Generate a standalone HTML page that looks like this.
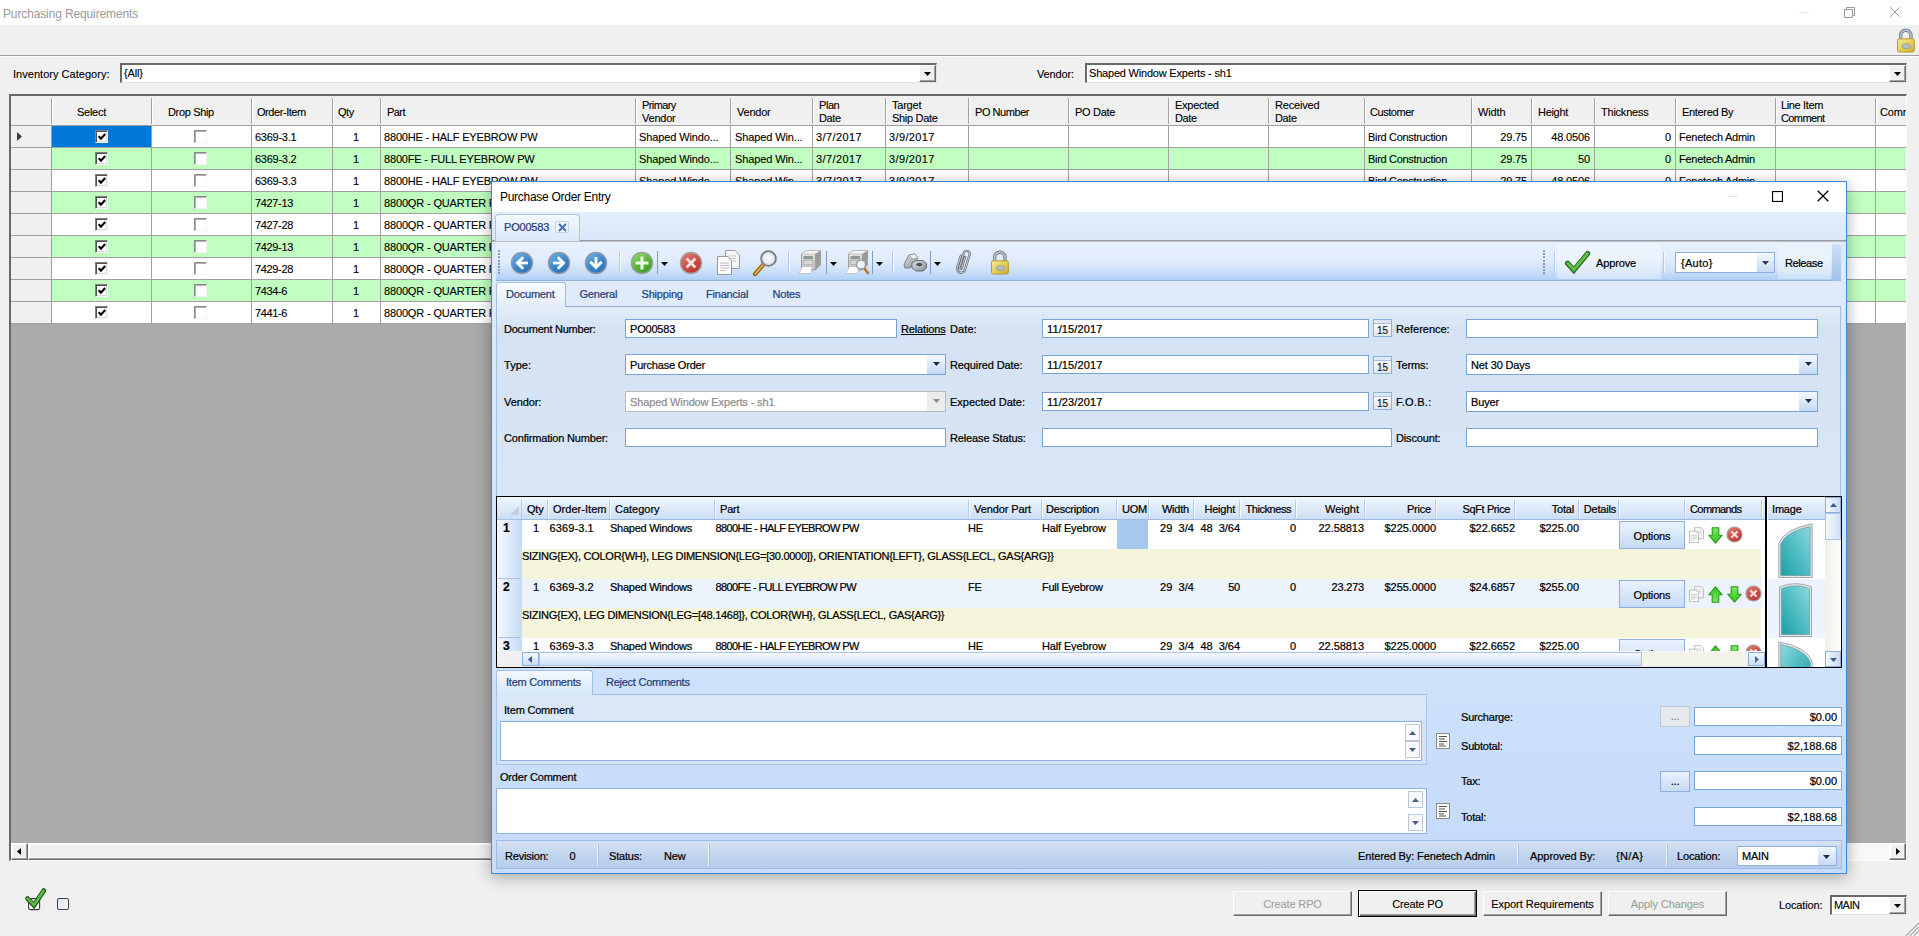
<!DOCTYPE html>
<html lang="en"><head><meta charset="utf-8"><title>Purchasing Requirements</title>
<style>
html,body{margin:0;padding:0}
body{width:1919px;height:936px;position:relative;overflow:hidden;background:#f0f0f0;font-family:"Liberation Sans",sans-serif;font-size:11px;color:#000}
div,span.t,svg{position:absolute;box-sizing:border-box}
span.t{white-space:pre;line-height:14px;height:14px;overflow:visible}
.m{font-size:11px;letter-spacing:-0.15px;-webkit-text-stroke:0.12px}
.d{font-size:11px;letter-spacing:-0.2px;-webkit-text-stroke:0.22px}
.dn{color:#1e3d7b}
</style></head>
<body>
<div style="left:0px;top:0px;width:1919px;height:25px;background:#fff"></div>
<span class="t " style="left:3px;top:7px;font-size:12px;color:#999;letter-spacing:-0.13px">Purchasing Requirements</span>
<svg style="left:1799px;top:12px" width="10" height="1" viewBox="0 0 10 1" ><rect width="10" height="1" fill="#e6e6e6"/></svg>
<svg style="left:1844px;top:7px" width="11" height="11" viewBox="0 0 11 11" ><path d="M2.5 2.5V0.5H10.5V8.5H8.5M0.5 2.5H8.5V10.5H0.5Z" fill="none" stroke="#999" stroke-width="1"/></svg>
<svg style="left:1890px;top:7px" width="10" height="10" viewBox="0 0 10 10" ><path d="M0.3 0.3L9.7 9.7M9.7 0.3L0.3 9.7" fill="none" stroke="#999" stroke-width="1"/></svg>
<div style="left:0px;top:55px;width:1919px;height:1px;background:#a0a0a0"></div>
<div style="left:0px;top:56px;width:1919px;height:1px;background:#fff"></div>
<svg style="left:1895.5px;top:27.5px" width="20" height="25" viewBox="0 0 20 25" >
<defs><linearGradient id="lkb" x1="0" y1="0" x2="1" y2="1"><stop offset="0" stop-color="#f6ea9c"/><stop offset="0.5" stop-color="#e6cf58"/><stop offset="1" stop-color="#cfae30"/></linearGradient></defs>
<path d="M4.6 12.5V7.4a5.2 5.2 0 0 1 10.4 0V12.5" fill="none" stroke="#76838f" stroke-width="3.4"/>
<path d="M4.6 12.5V7.4a5.2 5.2 0 0 1 10.4 0V12.5" fill="none" stroke="#b9c5d0" stroke-width="1.5"/>
<rect x="1.5" y="10.8" width="16.8" height="13.2" rx="1.6" fill="url(#lkb)" stroke="#b59a30" stroke-width="1"/>
<ellipse cx="10.4" cy="18.2" rx="4.3" ry="2.3" fill="#b4bcc4" stroke="#8d959d" stroke-width="0.8"/>
</svg>
<span class="t m" style="left:13px;top:67px;letter-spacing:0.03px;">Inventory Category:</span>
<div style="left:120px;top:63px;width:817px;height:20px;background:#fff;border-top:2px solid #696969;border-left:2px solid #696969;border-bottom:1px solid #e3e3e3;border-right:1px solid #e3e3e3"></div>
<div style="left:919px;top:65px;width:17px;height:17px;background:#f0f0f0;border-top:1px solid #fff;border-left:1px solid #fff;border-right:1px solid #696969;border-bottom:1px solid #696969;box-shadow:inset -1px -1px 0 #a0a0a0"></div>
<svg style="left:923.5px;top:71.5px" width="7" height="4" viewBox="0 0 7 4" ><polygon points="0,0 7,0 3.5,4" fill="#000"/></svg>
<span class="t m" style="left:124px;top:66px;">{All}</span>
<span class="t m" style="left:1037px;top:67px;">Vendor:</span>
<div style="left:1085px;top:63px;width:822px;height:20px;background:#fff;border-top:2px solid #696969;border-left:2px solid #696969;border-bottom:1px solid #e3e3e3;border-right:1px solid #e3e3e3"></div>
<div style="left:1889px;top:65px;width:17px;height:17px;background:#f0f0f0;border-top:1px solid #fff;border-left:1px solid #fff;border-right:1px solid #696969;border-bottom:1px solid #696969;box-shadow:inset -1px -1px 0 #a0a0a0"></div>
<svg style="left:1893.5px;top:71.5px" width="7" height="4" viewBox="0 0 7 4" ><polygon points="0,0 7,0 3.5,4" fill="#000"/></svg>
<span class="t m" style="left:1089px;top:66px;letter-spacing:-0.20px;">Shaped Window Experts - sh1</span>
<div style="left:9px;top:94px;width:1898px;height:767px;background:#ababab;border:2px solid #696969;border-right:1px solid #fff;border-bottom:1px solid #fff"></div>
<div style="left:11px;top:96px;width:1895px;height:30px;background:#f0f0f0;border-bottom:1px solid #a0a0a0"></div>
<div style="left:52px;top:126px;width:1854px;height:22px;background:#fff;border-bottom:1px solid #a0a0a0"></div>
<div style="left:11px;top:126px;width:40px;height:22px;background:#f0f0f0;border-bottom:1px solid #a0a0a0"></div>
<div style="left:52px;top:148px;width:1854px;height:22px;background:#c0ffc0;border-bottom:1px solid #a0a0a0"></div>
<div style="left:11px;top:148px;width:40px;height:22px;background:#f0f0f0;border-bottom:1px solid #a0a0a0"></div>
<div style="left:52px;top:170px;width:1854px;height:22px;background:#fff;border-bottom:1px solid #a0a0a0"></div>
<div style="left:11px;top:170px;width:40px;height:22px;background:#f0f0f0;border-bottom:1px solid #a0a0a0"></div>
<div style="left:52px;top:192px;width:1854px;height:22px;background:#c0ffc0;border-bottom:1px solid #a0a0a0"></div>
<div style="left:11px;top:192px;width:40px;height:22px;background:#f0f0f0;border-bottom:1px solid #a0a0a0"></div>
<div style="left:52px;top:214px;width:1854px;height:22px;background:#fff;border-bottom:1px solid #a0a0a0"></div>
<div style="left:11px;top:214px;width:40px;height:22px;background:#f0f0f0;border-bottom:1px solid #a0a0a0"></div>
<div style="left:52px;top:236px;width:1854px;height:22px;background:#c0ffc0;border-bottom:1px solid #a0a0a0"></div>
<div style="left:11px;top:236px;width:40px;height:22px;background:#f0f0f0;border-bottom:1px solid #a0a0a0"></div>
<div style="left:52px;top:258px;width:1854px;height:22px;background:#fff;border-bottom:1px solid #a0a0a0"></div>
<div style="left:11px;top:258px;width:40px;height:22px;background:#f0f0f0;border-bottom:1px solid #a0a0a0"></div>
<div style="left:52px;top:280px;width:1854px;height:22px;background:#c0ffc0;border-bottom:1px solid #a0a0a0"></div>
<div style="left:11px;top:280px;width:40px;height:22px;background:#f0f0f0;border-bottom:1px solid #a0a0a0"></div>
<div style="left:52px;top:302px;width:1854px;height:22px;background:#fff;border-bottom:1px solid #a0a0a0"></div>
<div style="left:11px;top:302px;width:40px;height:22px;background:#f0f0f0;border-bottom:1px solid #a0a0a0"></div>
<div style="left:51px;top:98px;width:1px;height:26px;background:#a0a0a0"></div>
<div style="left:52px;top:98px;width:1px;height:26px;background:#fff"></div>
<div style="left:51px;top:126px;width:1px;height:198px;background:#a0a0a0"></div>
<div style="left:151px;top:98px;width:1px;height:26px;background:#a0a0a0"></div>
<div style="left:152px;top:98px;width:1px;height:26px;background:#fff"></div>
<div style="left:151px;top:126px;width:1px;height:198px;background:#a0a0a0"></div>
<div style="left:251px;top:98px;width:1px;height:26px;background:#a0a0a0"></div>
<div style="left:252px;top:98px;width:1px;height:26px;background:#fff"></div>
<div style="left:251px;top:126px;width:1px;height:198px;background:#a0a0a0"></div>
<div style="left:332px;top:98px;width:1px;height:26px;background:#a0a0a0"></div>
<div style="left:333px;top:98px;width:1px;height:26px;background:#fff"></div>
<div style="left:332px;top:126px;width:1px;height:198px;background:#a0a0a0"></div>
<div style="left:380px;top:98px;width:1px;height:26px;background:#a0a0a0"></div>
<div style="left:381px;top:98px;width:1px;height:26px;background:#fff"></div>
<div style="left:380px;top:126px;width:1px;height:198px;background:#a0a0a0"></div>
<div style="left:635px;top:98px;width:1px;height:26px;background:#a0a0a0"></div>
<div style="left:636px;top:98px;width:1px;height:26px;background:#fff"></div>
<div style="left:635px;top:126px;width:1px;height:198px;background:#a0a0a0"></div>
<div style="left:730px;top:98px;width:1px;height:26px;background:#a0a0a0"></div>
<div style="left:731px;top:98px;width:1px;height:26px;background:#fff"></div>
<div style="left:730px;top:126px;width:1px;height:198px;background:#a0a0a0"></div>
<div style="left:812px;top:98px;width:1px;height:26px;background:#a0a0a0"></div>
<div style="left:813px;top:98px;width:1px;height:26px;background:#fff"></div>
<div style="left:812px;top:126px;width:1px;height:198px;background:#a0a0a0"></div>
<div style="left:885px;top:98px;width:1px;height:26px;background:#a0a0a0"></div>
<div style="left:886px;top:98px;width:1px;height:26px;background:#fff"></div>
<div style="left:885px;top:126px;width:1px;height:198px;background:#a0a0a0"></div>
<div style="left:968px;top:98px;width:1px;height:26px;background:#a0a0a0"></div>
<div style="left:969px;top:98px;width:1px;height:26px;background:#fff"></div>
<div style="left:968px;top:126px;width:1px;height:198px;background:#a0a0a0"></div>
<div style="left:1068px;top:98px;width:1px;height:26px;background:#a0a0a0"></div>
<div style="left:1069px;top:98px;width:1px;height:26px;background:#fff"></div>
<div style="left:1068px;top:126px;width:1px;height:198px;background:#a0a0a0"></div>
<div style="left:1168px;top:98px;width:1px;height:26px;background:#a0a0a0"></div>
<div style="left:1169px;top:98px;width:1px;height:26px;background:#fff"></div>
<div style="left:1168px;top:126px;width:1px;height:198px;background:#a0a0a0"></div>
<div style="left:1268px;top:98px;width:1px;height:26px;background:#a0a0a0"></div>
<div style="left:1269px;top:98px;width:1px;height:26px;background:#fff"></div>
<div style="left:1268px;top:126px;width:1px;height:198px;background:#a0a0a0"></div>
<div style="left:1364px;top:98px;width:1px;height:26px;background:#a0a0a0"></div>
<div style="left:1365px;top:98px;width:1px;height:26px;background:#fff"></div>
<div style="left:1364px;top:126px;width:1px;height:198px;background:#a0a0a0"></div>
<div style="left:1471px;top:98px;width:1px;height:26px;background:#a0a0a0"></div>
<div style="left:1472px;top:98px;width:1px;height:26px;background:#fff"></div>
<div style="left:1471px;top:126px;width:1px;height:198px;background:#a0a0a0"></div>
<div style="left:1531px;top:98px;width:1px;height:26px;background:#a0a0a0"></div>
<div style="left:1532px;top:98px;width:1px;height:26px;background:#fff"></div>
<div style="left:1531px;top:126px;width:1px;height:198px;background:#a0a0a0"></div>
<div style="left:1594px;top:98px;width:1px;height:26px;background:#a0a0a0"></div>
<div style="left:1595px;top:98px;width:1px;height:26px;background:#fff"></div>
<div style="left:1594px;top:126px;width:1px;height:198px;background:#a0a0a0"></div>
<div style="left:1675px;top:98px;width:1px;height:26px;background:#a0a0a0"></div>
<div style="left:1676px;top:98px;width:1px;height:26px;background:#fff"></div>
<div style="left:1675px;top:126px;width:1px;height:198px;background:#a0a0a0"></div>
<div style="left:1775px;top:98px;width:1px;height:26px;background:#a0a0a0"></div>
<div style="left:1776px;top:98px;width:1px;height:26px;background:#fff"></div>
<div style="left:1775px;top:126px;width:1px;height:198px;background:#a0a0a0"></div>
<div style="left:1875px;top:98px;width:1px;height:26px;background:#a0a0a0"></div>
<div style="left:1876px;top:98px;width:1px;height:26px;background:#fff"></div>
<div style="left:1875px;top:126px;width:1px;height:198px;background:#a0a0a0"></div>
<div style="left:52px;top:126px;width:99px;height:21px;background:#0078d7"></div>
<svg style="left:17.0px;top:132.0px" width="5" height="9" viewBox="0 0 5 9" ><polygon points="0,0 5,4.5 0,9" fill="#3c3c3c"/></svg>
<span class="t m" style="left:77px;top:105px;letter-spacing:-0.26px;">Select</span>
<span class="t m" style="left:168px;top:105px;letter-spacing:-0.35px;">Drop Ship</span>
<span class="t m" style="left:257px;top:105px;letter-spacing:-0.44px;">Order-Item</span>
<span class="t m" style="left:338px;top:105px;letter-spacing:-0.46px;">Qty</span>
<span class="t m" style="left:387px;top:105px;letter-spacing:-0.55px;">Part</span>
<span class="t m" style="left:737px;top:105px;letter-spacing:-0.23px;">Vendor</span>
<span class="t m" style="left:975px;top:105px;letter-spacing:-0.45px;">PO Number</span>
<span class="t m" style="left:1075px;top:105px;letter-spacing:-0.31px;">PO Date</span>
<span class="t m" style="left:1370px;top:105px;letter-spacing:-0.46px;">Customer</span>
<span class="t m" style="left:1478px;top:105px;letter-spacing:-0.15px;">Width</span>
<span class="t m" style="left:1538px;top:105px;letter-spacing:-0.30px;">Height</span>
<span class="t m" style="left:1601px;top:105px;letter-spacing:-0.23px;">Thickness</span>
<span class="t m" style="left:1682px;top:105px;letter-spacing:-0.32px;">Entered By</span>
<span class="t m" style="left:1880px;top:105px;">Comments</span>
<span class="t m" style="left:642px;top:98px;letter-spacing:-0.60px;">Primary</span>
<span class="t m" style="left:642px;top:111px;letter-spacing:-0.23px;">Vendor</span>
<span class="t m" style="left:819px;top:98px;letter-spacing:-0.45px;">Plan</span>
<span class="t m" style="left:819px;top:111px;letter-spacing:-0.38px;">Date</span>
<span class="t m" style="left:892px;top:98px;letter-spacing:-0.22px;">Target</span>
<span class="t m" style="left:892px;top:111px;letter-spacing:-0.31px;">Ship Date</span>
<span class="t m" style="left:1175px;top:98px;letter-spacing:-0.27px;">Expected</span>
<span class="t m" style="left:1175px;top:111px;letter-spacing:-0.38px;">Date</span>
<span class="t m" style="left:1275px;top:98px;letter-spacing:-0.17px;">Received</span>
<span class="t m" style="left:1275px;top:111px;letter-spacing:-0.38px;">Date</span>
<span class="t m" style="left:1781px;top:98px;letter-spacing:-0.36px;">Line Item</span>
<span class="t m" style="left:1781px;top:111px;letter-spacing:-0.60px;">Comment</span>
<div style="left:1906px;top:96px;width:14px;height:30px;background:#f0f0f0;border-left:1px solid #fff"></div>
<div style="left:95px;top:130px;width:13px;height:13px;background:#fff;border:1px solid;border-color:#808080 #f4f4f4 #f4f4f4 #808080;box-shadow:inset 1px 1px 0 #505050, inset -1px -1px 0 #dcdcdc"></div>
<svg style="left:98px;top:133px" width="8" height="8" viewBox="0 0 8 8" ><path d="M0.6 3.2L2.9 5.6L7.2 1.0" fill="none" stroke="#000" stroke-width="2.1"/></svg>
<div style="left:194px;top:130px;width:13px;height:13px;background:#fff;border:1px solid;border-color:#8a8a8a #f4f4f4 #f4f4f4 #8a8a8a;box-shadow:inset 1px 1px 0 #b0b0b0"></div>
<span class="t m" style="left:255px;top:129.5px;letter-spacing:-0.27px;">6369-3.1</span>
<span class="t m" style="left:333px;top:129.5px;width:26px;text-align:right;">1</span>
<span class="t m" style="left:384px;top:129.5px;letter-spacing:-0.18px;">8800HE - HALF EYEBROW PW</span>
<span class="t m" style="left:639px;top:129.5px;letter-spacing:-0.12px;">Shaped Windo...</span>
<span class="t m" style="left:735px;top:129.5px;letter-spacing:-0.12px;">Shaped Win...</span>
<span class="t m" style="left:816px;top:129.5px;letter-spacing:0.40px;">3/7/2017</span>
<span class="t m" style="left:889px;top:129.5px;letter-spacing:0.37px;">3/9/2017</span>
<span class="t m" style="left:1368px;top:129.5px;letter-spacing:-0.32px;">Bird Construction</span>
<span class="t m" style="left:1472px;top:129.5px;width:55px;text-align:right;letter-spacing:-0.17px;">29.75</span>
<span class="t m" style="left:1532px;top:129.5px;width:58px;text-align:right;letter-spacing:-0.15px;">48.0506</span>
<span class="t m" style="left:1595px;top:129.5px;width:76px;text-align:right;">0</span>
<span class="t m" style="left:1679px;top:129.5px;letter-spacing:-0.26px;">Fenetech Admin</span>
<div style="left:95px;top:152px;width:13px;height:13px;background:#fff;border:1px solid;border-color:#808080 #f4f4f4 #f4f4f4 #808080;box-shadow:inset 1px 1px 0 #505050, inset -1px -1px 0 #dcdcdc"></div>
<svg style="left:98px;top:155px" width="8" height="8" viewBox="0 0 8 8" ><path d="M0.6 3.2L2.9 5.6L7.2 1.0" fill="none" stroke="#000" stroke-width="2.1"/></svg>
<div style="left:194px;top:152px;width:13px;height:13px;background:#fff;border:1px solid;border-color:#8a8a8a #f4f4f4 #f4f4f4 #8a8a8a;box-shadow:inset 1px 1px 0 #b0b0b0"></div>
<span class="t m" style="left:255px;top:151.5px;letter-spacing:-0.27px;">6369-3.2</span>
<span class="t m" style="left:333px;top:151.5px;width:26px;text-align:right;">1</span>
<span class="t m" style="left:384px;top:151.5px;letter-spacing:-0.18px;">8800FE - FULL EYEBROW PW</span>
<span class="t m" style="left:639px;top:151.5px;letter-spacing:-0.12px;">Shaped Windo...</span>
<span class="t m" style="left:735px;top:151.5px;letter-spacing:-0.12px;">Shaped Win...</span>
<span class="t m" style="left:816px;top:151.5px;letter-spacing:0.40px;">3/7/2017</span>
<span class="t m" style="left:889px;top:151.5px;letter-spacing:0.37px;">3/9/2017</span>
<span class="t m" style="left:1368px;top:151.5px;letter-spacing:-0.32px;">Bird Construction</span>
<span class="t m" style="left:1472px;top:151.5px;width:55px;text-align:right;letter-spacing:-0.17px;">29.75</span>
<span class="t m" style="left:1532px;top:151.5px;width:58px;text-align:right;">50</span>
<span class="t m" style="left:1595px;top:151.5px;width:76px;text-align:right;">0</span>
<span class="t m" style="left:1679px;top:151.5px;letter-spacing:-0.26px;">Fenetech Admin</span>
<div style="left:95px;top:174px;width:13px;height:13px;background:#fff;border:1px solid;border-color:#808080 #f4f4f4 #f4f4f4 #808080;box-shadow:inset 1px 1px 0 #505050, inset -1px -1px 0 #dcdcdc"></div>
<svg style="left:98px;top:177px" width="8" height="8" viewBox="0 0 8 8" ><path d="M0.6 3.2L2.9 5.6L7.2 1.0" fill="none" stroke="#000" stroke-width="2.1"/></svg>
<div style="left:194px;top:174px;width:13px;height:13px;background:#fff;border:1px solid;border-color:#8a8a8a #f4f4f4 #f4f4f4 #8a8a8a;box-shadow:inset 1px 1px 0 #b0b0b0"></div>
<span class="t m" style="left:255px;top:173.5px;letter-spacing:-0.27px;">6369-3.3</span>
<span class="t m" style="left:333px;top:173.5px;width:26px;text-align:right;">1</span>
<span class="t m" style="left:384px;top:173.5px;letter-spacing:-0.18px;">8800HE - HALF EYEBROW PW</span>
<span class="t m" style="left:639px;top:173.5px;letter-spacing:-0.12px;">Shaped Windo...</span>
<span class="t m" style="left:735px;top:173.5px;letter-spacing:-0.12px;">Shaped Win...</span>
<span class="t m" style="left:816px;top:173.5px;letter-spacing:0.40px;">3/7/2017</span>
<span class="t m" style="left:889px;top:173.5px;letter-spacing:0.37px;">3/9/2017</span>
<span class="t m" style="left:1368px;top:173.5px;letter-spacing:-0.32px;">Bird Construction</span>
<span class="t m" style="left:1472px;top:173.5px;width:55px;text-align:right;letter-spacing:-0.17px;">29.75</span>
<span class="t m" style="left:1532px;top:173.5px;width:58px;text-align:right;letter-spacing:-0.15px;">48.0506</span>
<span class="t m" style="left:1595px;top:173.5px;width:76px;text-align:right;">0</span>
<span class="t m" style="left:1679px;top:173.5px;letter-spacing:-0.26px;">Fenetech Admin</span>
<div style="left:95px;top:196px;width:13px;height:13px;background:#fff;border:1px solid;border-color:#808080 #f4f4f4 #f4f4f4 #808080;box-shadow:inset 1px 1px 0 #505050, inset -1px -1px 0 #dcdcdc"></div>
<svg style="left:98px;top:199px" width="8" height="8" viewBox="0 0 8 8" ><path d="M0.6 3.2L2.9 5.6L7.2 1.0" fill="none" stroke="#000" stroke-width="2.1"/></svg>
<div style="left:194px;top:196px;width:13px;height:13px;background:#fff;border:1px solid;border-color:#8a8a8a #f4f4f4 #f4f4f4 #8a8a8a;box-shadow:inset 1px 1px 0 #b0b0b0"></div>
<span class="t m" style="left:255px;top:195.5px;letter-spacing:-0.34px;">7427-13</span>
<span class="t m" style="left:333px;top:195.5px;width:26px;text-align:right;">1</span>
<span class="t m" style="left:384px;top:195.5px;">8800QR - QUARTER ROUND PW</span>
<span class="t m" style="left:639px;top:195.5px;letter-spacing:-0.12px;">Shaped Windo...</span>
<span class="t m" style="left:735px;top:195.5px;letter-spacing:-0.12px;">Shaped Win...</span>
<span class="t m" style="left:816px;top:195.5px;letter-spacing:0.40px;">3/7/2017</span>
<span class="t m" style="left:889px;top:195.5px;letter-spacing:0.37px;">3/9/2017</span>
<span class="t m" style="left:1368px;top:195.5px;letter-spacing:-0.32px;">Bird Construction</span>
<span class="t m" style="left:1472px;top:195.5px;width:55px;text-align:right;letter-spacing:-0.17px;">29.75</span>
<span class="t m" style="left:1532px;top:195.5px;width:58px;text-align:right;">24</span>
<span class="t m" style="left:1595px;top:195.5px;width:76px;text-align:right;">0</span>
<span class="t m" style="left:1679px;top:195.5px;letter-spacing:-0.26px;">Fenetech Admin</span>
<div style="left:95px;top:218px;width:13px;height:13px;background:#fff;border:1px solid;border-color:#808080 #f4f4f4 #f4f4f4 #808080;box-shadow:inset 1px 1px 0 #505050, inset -1px -1px 0 #dcdcdc"></div>
<svg style="left:98px;top:221px" width="8" height="8" viewBox="0 0 8 8" ><path d="M0.6 3.2L2.9 5.6L7.2 1.0" fill="none" stroke="#000" stroke-width="2.1"/></svg>
<div style="left:194px;top:218px;width:13px;height:13px;background:#fff;border:1px solid;border-color:#8a8a8a #f4f4f4 #f4f4f4 #8a8a8a;box-shadow:inset 1px 1px 0 #b0b0b0"></div>
<span class="t m" style="left:255px;top:217.5px;letter-spacing:-0.34px;">7427-28</span>
<span class="t m" style="left:333px;top:217.5px;width:26px;text-align:right;">1</span>
<span class="t m" style="left:384px;top:217.5px;">8800QR - QUARTER ROUND PW</span>
<span class="t m" style="left:639px;top:217.5px;letter-spacing:-0.12px;">Shaped Windo...</span>
<span class="t m" style="left:735px;top:217.5px;letter-spacing:-0.12px;">Shaped Win...</span>
<span class="t m" style="left:816px;top:217.5px;letter-spacing:0.40px;">3/7/2017</span>
<span class="t m" style="left:889px;top:217.5px;letter-spacing:0.37px;">3/9/2017</span>
<span class="t m" style="left:1368px;top:217.5px;letter-spacing:-0.32px;">Bird Construction</span>
<span class="t m" style="left:1472px;top:217.5px;width:55px;text-align:right;letter-spacing:-0.17px;">29.75</span>
<span class="t m" style="left:1532px;top:217.5px;width:58px;text-align:right;">24</span>
<span class="t m" style="left:1595px;top:217.5px;width:76px;text-align:right;">0</span>
<span class="t m" style="left:1679px;top:217.5px;letter-spacing:-0.26px;">Fenetech Admin</span>
<div style="left:95px;top:240px;width:13px;height:13px;background:#fff;border:1px solid;border-color:#808080 #f4f4f4 #f4f4f4 #808080;box-shadow:inset 1px 1px 0 #505050, inset -1px -1px 0 #dcdcdc"></div>
<svg style="left:98px;top:243px" width="8" height="8" viewBox="0 0 8 8" ><path d="M0.6 3.2L2.9 5.6L7.2 1.0" fill="none" stroke="#000" stroke-width="2.1"/></svg>
<div style="left:194px;top:240px;width:13px;height:13px;background:#fff;border:1px solid;border-color:#8a8a8a #f4f4f4 #f4f4f4 #8a8a8a;box-shadow:inset 1px 1px 0 #b0b0b0"></div>
<span class="t m" style="left:255px;top:239.5px;letter-spacing:-0.34px;">7429-13</span>
<span class="t m" style="left:333px;top:239.5px;width:26px;text-align:right;">1</span>
<span class="t m" style="left:384px;top:239.5px;">8800QR - QUARTER ROUND PW</span>
<span class="t m" style="left:639px;top:239.5px;letter-spacing:-0.12px;">Shaped Windo...</span>
<span class="t m" style="left:735px;top:239.5px;letter-spacing:-0.12px;">Shaped Win...</span>
<span class="t m" style="left:816px;top:239.5px;letter-spacing:0.40px;">3/7/2017</span>
<span class="t m" style="left:889px;top:239.5px;letter-spacing:0.37px;">3/9/2017</span>
<span class="t m" style="left:1368px;top:239.5px;letter-spacing:-0.32px;">Bird Construction</span>
<span class="t m" style="left:1472px;top:239.5px;width:55px;text-align:right;letter-spacing:-0.17px;">29.75</span>
<span class="t m" style="left:1532px;top:239.5px;width:58px;text-align:right;">24</span>
<span class="t m" style="left:1595px;top:239.5px;width:76px;text-align:right;">0</span>
<span class="t m" style="left:1679px;top:239.5px;letter-spacing:-0.26px;">Fenetech Admin</span>
<div style="left:95px;top:262px;width:13px;height:13px;background:#fff;border:1px solid;border-color:#808080 #f4f4f4 #f4f4f4 #808080;box-shadow:inset 1px 1px 0 #505050, inset -1px -1px 0 #dcdcdc"></div>
<svg style="left:98px;top:265px" width="8" height="8" viewBox="0 0 8 8" ><path d="M0.6 3.2L2.9 5.6L7.2 1.0" fill="none" stroke="#000" stroke-width="2.1"/></svg>
<div style="left:194px;top:262px;width:13px;height:13px;background:#fff;border:1px solid;border-color:#8a8a8a #f4f4f4 #f4f4f4 #8a8a8a;box-shadow:inset 1px 1px 0 #b0b0b0"></div>
<span class="t m" style="left:255px;top:261.5px;letter-spacing:-0.34px;">7429-28</span>
<span class="t m" style="left:333px;top:261.5px;width:26px;text-align:right;">1</span>
<span class="t m" style="left:384px;top:261.5px;">8800QR - QUARTER ROUND PW</span>
<span class="t m" style="left:639px;top:261.5px;letter-spacing:-0.12px;">Shaped Windo...</span>
<span class="t m" style="left:735px;top:261.5px;letter-spacing:-0.12px;">Shaped Win...</span>
<span class="t m" style="left:816px;top:261.5px;letter-spacing:0.40px;">3/7/2017</span>
<span class="t m" style="left:889px;top:261.5px;letter-spacing:0.37px;">3/9/2017</span>
<span class="t m" style="left:1368px;top:261.5px;letter-spacing:-0.32px;">Bird Construction</span>
<span class="t m" style="left:1472px;top:261.5px;width:55px;text-align:right;letter-spacing:-0.17px;">29.75</span>
<span class="t m" style="left:1532px;top:261.5px;width:58px;text-align:right;">24</span>
<span class="t m" style="left:1595px;top:261.5px;width:76px;text-align:right;">0</span>
<span class="t m" style="left:1679px;top:261.5px;letter-spacing:-0.26px;">Fenetech Admin</span>
<div style="left:95px;top:284px;width:13px;height:13px;background:#fff;border:1px solid;border-color:#808080 #f4f4f4 #f4f4f4 #808080;box-shadow:inset 1px 1px 0 #505050, inset -1px -1px 0 #dcdcdc"></div>
<svg style="left:98px;top:287px" width="8" height="8" viewBox="0 0 8 8" ><path d="M0.6 3.2L2.9 5.6L7.2 1.0" fill="none" stroke="#000" stroke-width="2.1"/></svg>
<div style="left:194px;top:284px;width:13px;height:13px;background:#fff;border:1px solid;border-color:#8a8a8a #f4f4f4 #f4f4f4 #8a8a8a;box-shadow:inset 1px 1px 0 #b0b0b0"></div>
<span class="t m" style="left:255px;top:283.5px;letter-spacing:-0.38px;">7434-6</span>
<span class="t m" style="left:333px;top:283.5px;width:26px;text-align:right;">1</span>
<span class="t m" style="left:384px;top:283.5px;">8800QR - QUARTER ROUND PW</span>
<span class="t m" style="left:639px;top:283.5px;letter-spacing:-0.12px;">Shaped Windo...</span>
<span class="t m" style="left:735px;top:283.5px;letter-spacing:-0.12px;">Shaped Win...</span>
<span class="t m" style="left:816px;top:283.5px;letter-spacing:0.40px;">3/7/2017</span>
<span class="t m" style="left:889px;top:283.5px;letter-spacing:0.37px;">3/9/2017</span>
<span class="t m" style="left:1368px;top:283.5px;letter-spacing:-0.32px;">Bird Construction</span>
<span class="t m" style="left:1472px;top:283.5px;width:55px;text-align:right;letter-spacing:-0.17px;">29.75</span>
<span class="t m" style="left:1532px;top:283.5px;width:58px;text-align:right;">24</span>
<span class="t m" style="left:1595px;top:283.5px;width:76px;text-align:right;">0</span>
<span class="t m" style="left:1679px;top:283.5px;letter-spacing:-0.26px;">Fenetech Admin</span>
<div style="left:95px;top:306px;width:13px;height:13px;background:#fff;border:1px solid;border-color:#808080 #f4f4f4 #f4f4f4 #808080;box-shadow:inset 1px 1px 0 #505050, inset -1px -1px 0 #dcdcdc"></div>
<svg style="left:98px;top:309px" width="8" height="8" viewBox="0 0 8 8" ><path d="M0.6 3.2L2.9 5.6L7.2 1.0" fill="none" stroke="#000" stroke-width="2.1"/></svg>
<div style="left:194px;top:306px;width:13px;height:13px;background:#fff;border:1px solid;border-color:#8a8a8a #f4f4f4 #f4f4f4 #8a8a8a;box-shadow:inset 1px 1px 0 #b0b0b0"></div>
<span class="t m" style="left:255px;top:305.5px;letter-spacing:-0.38px;">7441-6</span>
<span class="t m" style="left:333px;top:305.5px;width:26px;text-align:right;">1</span>
<span class="t m" style="left:384px;top:305.5px;">8800QR - QUARTER ROUND PW</span>
<span class="t m" style="left:639px;top:305.5px;letter-spacing:-0.12px;">Shaped Windo...</span>
<span class="t m" style="left:735px;top:305.5px;letter-spacing:-0.12px;">Shaped Win...</span>
<span class="t m" style="left:816px;top:305.5px;letter-spacing:0.40px;">3/7/2017</span>
<span class="t m" style="left:889px;top:305.5px;letter-spacing:0.37px;">3/9/2017</span>
<span class="t m" style="left:1368px;top:305.5px;letter-spacing:-0.32px;">Bird Construction</span>
<span class="t m" style="left:1472px;top:305.5px;width:55px;text-align:right;letter-spacing:-0.17px;">29.75</span>
<span class="t m" style="left:1532px;top:305.5px;width:58px;text-align:right;">24</span>
<span class="t m" style="left:1595px;top:305.5px;width:76px;text-align:right;">0</span>
<span class="t m" style="left:1679px;top:305.5px;letter-spacing:-0.26px;">Fenetech Admin</span>
<div style="left:11px;top:843px;width:1895px;height:17px;background:#f8f8f8"></div>
<div style="left:11px;top:843px;width:17px;height:17px;background:#f0f0f0;border-top:1px solid #fff;border-left:1px solid #fff;border-right:1px solid #696969;border-bottom:1px solid #696969;box-shadow:inset -1px -1px 0 #a0a0a0, inset 1px 1px 0 #fff"></div>
<svg style="left:16.5px;top:847.5px" width="4" height="7" viewBox="0 0 4 7" ><polygon points="4,0 0,3.5 4,7" fill="#000"/></svg>
<div style="left:28px;top:843px;width:1812px;height:17px;background:#f0f0f0;border-top:1px solid #fff;border-left:1px solid #fff;border-right:1px solid #696969;border-bottom:1px solid #696969;box-shadow:inset -1px -1px 0 #a0a0a0, inset 1px 1px 0 #fff"></div>
<div style="left:1889px;top:843px;width:17px;height:17px;background:#f0f0f0;border-top:1px solid #fff;border-left:1px solid #fff;border-right:1px solid #696969;border-bottom:1px solid #696969;box-shadow:inset -1px -1px 0 #a0a0a0, inset 1px 1px 0 #fff"></div>
<svg style="left:1895.5px;top:847.5px" width="4" height="7" viewBox="0 0 4 7" ><polygon points="0,0 4,3.5 0,7" fill="#000"/></svg>
<svg style="left:24px;top:886px" width="24" height="26" viewBox="0 0 24 26" ><rect x="4.6" y="12.6" width="11" height="11" rx="1.6" fill="#f8fbf8" stroke="#3a3a3a" stroke-width="1.1"/>
<path d="M3.6 12.6L10 19.4L19.8 4.6" fill="none" stroke="#235f19" stroke-width="4.8" stroke-linejoin="miter" stroke-linecap="round"/>
<path d="M3.8 12.7L10 19L19.6 4.8" fill="none" stroke="#5fba4a" stroke-width="2.6" stroke-linecap="round"/></svg>
<div style="left:57px;top:898px;width:12px;height:12px;background:linear-gradient(135deg,#dbe4f2,#fbfdff);border:1px solid #3d4149;border-radius:2px"></div>
<div style="left:1233px;top:891px;width:119px;height:25px;background:#f0f0f0;border-top:1px solid #fff;border-left:1px solid #fff;border-right:1px solid #696969;border-bottom:1px solid #696969;box-shadow:inset -1px -1px 0 #a0a0a0"></div>
<span class="t m" style="left:1233px;top:897.0px;width:119px;text-align:center;letter-spacing:-0.14px;color:#a0a0a0">Create RPO</span>
<div style="left:1358px;top:890px;width:119px;height:27px;background:#f0f0f0;border:1px solid #000;box-shadow:inset 1px 1px 0 #fff, inset -1px -1px 0 #696969, inset -2px -2px 0 #a0a0a0"></div>
<span class="t m" style="left:1358px;top:897.0px;width:119px;text-align:center;letter-spacing:-0.15px;color:#000">Create PO</span>
<div style="left:1483px;top:891px;width:119px;height:25px;background:#f0f0f0;border-top:1px solid #fff;border-left:1px solid #fff;border-right:1px solid #696969;border-bottom:1px solid #696969;box-shadow:inset -1px -1px 0 #a0a0a0"></div>
<span class="t m" style="left:1483px;top:897.0px;width:119px;text-align:center;letter-spacing:-0.04px;color:#000">Export Requirements</span>
<div style="left:1608px;top:891px;width:119px;height:25px;background:#f0f0f0;border-top:1px solid #fff;border-left:1px solid #fff;border-right:1px solid #696969;border-bottom:1px solid #696969;box-shadow:inset -1px -1px 0 #a0a0a0"></div>
<span class="t m" style="left:1608px;top:897.0px;width:119px;text-align:center;letter-spacing:-0.08px;color:#a0a0a0">Apply Changes</span>
<span class="t m" style="left:1779px;top:898px;letter-spacing:-0.13px;">Location:</span>
<div style="left:1830px;top:895px;width:77px;height:20px;background:#fff;border-top:2px solid #696969;border-left:2px solid #696969;border-bottom:1px solid #e3e3e3;border-right:1px solid #e3e3e3"></div>
<div style="left:1889px;top:897px;width:17px;height:17px;background:#f0f0f0;border-top:1px solid #fff;border-left:1px solid #fff;border-right:1px solid #696969;border-bottom:1px solid #696969;box-shadow:inset -1px -1px 0 #a0a0a0"></div>
<svg style="left:1893.5px;top:903.5px" width="7" height="4" viewBox="0 0 7 4" ><polygon points="0,0 7,0 3.5,4" fill="#000"/></svg>
<span class="t m" style="left:1834px;top:898px;letter-spacing:-0.55px;">MAIN</span>
<svg style="left:1903px;top:920px" width="16" height="16" viewBox="0 0 16 16" ><path d="M16 3L3 16M16 7L7 16M16 11L11 16" stroke="#a8a8a8" stroke-width="1.5"/><path d="M16 4.4L4.4 16M16 8.4L8.4 16M16 12.4L12.4 16" stroke="#fff" stroke-width="0.9"/></svg>
<div style="left:491px;top:181px;width:1356px;height:693px;background:linear-gradient(#e0ecfc 0%,#d6e6fa 45%,#c6dcf8 100%);border:1px solid #3b8ad6;box-shadow:0 3px 15px 0px rgba(0,0,0,0.33)"></div>
<div style="left:492px;top:182px;width:1354px;height:30px;background:#fff"></div>
<span class="t " style="left:500px;top:189px;font-size:12px;letter-spacing:-0.28px;height:16px;line-height:16px">Purchase Order Entry</span>
<svg style="left:1728px;top:196px" width="10" height="1" viewBox="0 0 10 1" ><rect width="10" height="1" fill="#e2e2e2"/></svg>
<svg style="left:1772px;top:191px" width="11" height="11" viewBox="0 0 11 11" ><rect x="0.5" y="0.5" width="10" height="10" fill="none" stroke="#000" stroke-width="1.2"/></svg>
<svg style="left:1817px;top:190px" width="12" height="12" viewBox="0 0 12 12" ><path d="M0.7 0.7L11.3 11.3M11.3 0.7L0.7 11.3" stroke="#000" stroke-width="1.3"/></svg>
<div style="left:492px;top:212px;width:1354px;height:28px;background:linear-gradient(#e3eefc,#d9e7f9)"></div>
<div style="left:492px;top:240px;width:1354px;height:1px;background:#9a9ca3"></div>
<div style="left:492px;top:241px;width:1354px;height:1px;background:#b9bdc6"></div>
<div style="left:495px;top:214px;width:85px;height:27px;background:linear-gradient(#f4f8fe,#dbe8f9);border:1px solid #a9c4e6;border-bottom:none;border-radius:4px 4px 0 0"></div>
<span class="t d dn" style="left:504px;top:220px;letter-spacing:-0.2px">PO00583</span>
<div style="left:555px;top:221px;width:14px;height:12px;border:1px solid #c5d3e6;border-radius:2px;background:#eef4fc"></div>
<svg style="left:557.5px;top:222.5px" width="9" height="9" viewBox="0 0 9 9" ><path d="M1 1L8 8M8 1L1 8" stroke="#3f6fa8" stroke-width="1.8"/></svg>
<div style="left:496px;top:242px;width:1345px;height:39px;background:linear-gradient(#e8f1fd 0%,#e1ecfb 48%,#c8def8 78%,#b1d0f8 96%,#86a3cb 100%)"></div>
<div style="left:1832px;top:244px;width:9px;height:37px;background:linear-gradient(#cfe0f6,#9fbfe8);border-radius:0 3px 3px 0"></div>
<div style="left:498px;top:250.0px;width:2px;height:2px;background:#7fa0cc"></div>
<div style="left:498px;top:253.2px;width:2px;height:2px;background:#7fa0cc"></div>
<div style="left:498px;top:256.4px;width:2px;height:2px;background:#7fa0cc"></div>
<div style="left:498px;top:259.6px;width:2px;height:2px;background:#7fa0cc"></div>
<div style="left:498px;top:262.8px;width:2px;height:2px;background:#7fa0cc"></div>
<div style="left:498px;top:266.0px;width:2px;height:2px;background:#7fa0cc"></div>
<div style="left:498px;top:269.2px;width:2px;height:2px;background:#7fa0cc"></div>
<div style="left:498px;top:272.4px;width:2px;height:2px;background:#7fa0cc"></div>
<div style="left:1543px;top:250.0px;width:2px;height:2px;background:#7fa0cc"></div>
<div style="left:1543px;top:253.2px;width:2px;height:2px;background:#7fa0cc"></div>
<div style="left:1543px;top:256.4px;width:2px;height:2px;background:#7fa0cc"></div>
<div style="left:1543px;top:259.6px;width:2px;height:2px;background:#7fa0cc"></div>
<div style="left:1543px;top:262.8px;width:2px;height:2px;background:#7fa0cc"></div>
<div style="left:1543px;top:266.0px;width:2px;height:2px;background:#7fa0cc"></div>
<div style="left:1543px;top:269.2px;width:2px;height:2px;background:#7fa0cc"></div>
<div style="left:1543px;top:272.4px;width:2px;height:2px;background:#7fa0cc"></div>
<div style="left:619px;top:252px;width:1px;height:21px;background:#b3c9e6"></div>
<div style="left:620px;top:252px;width:1px;height:21px;background:#f3f8fe"></div>
<div style="left:788px;top:252px;width:1px;height:21px;background:#b3c9e6"></div>
<div style="left:789px;top:252px;width:1px;height:21px;background:#f3f8fe"></div>
<div style="left:892px;top:252px;width:1px;height:21px;background:#b3c9e6"></div>
<div style="left:893px;top:252px;width:1px;height:21px;background:#f3f8fe"></div>
<div style="left:1554px;top:252px;width:1px;height:21px;background:#b3c9e6"></div>
<div style="left:1555px;top:252px;width:1px;height:21px;background:#f3f8fe"></div>
<div style="left:1663px;top:252px;width:1px;height:21px;background:#b3c9e6"></div>
<div style="left:1664px;top:252px;width:1px;height:21px;background:#f3f8fe"></div>
<svg style="left:509.5px;top:250.5px" width="24" height="24" viewBox="0 0 24 24" ><defs><linearGradient id="gb" x1="0.2" y1="0" x2="0.8" y2="1"><stop offset="0" stop-color="#66acdf"/><stop offset="0.55" stop-color="#3a86cb"/><stop offset="1" stop-color="#2c72b8"/></linearGradient></defs><circle cx="12" cy="12" r="11.2" fill="#8c98a8"/><circle cx="12" cy="12" r="9.8" fill="url(#gb)"/><g transform="rotate(0 12 12)"><path d="M13.2 6.3L7.5 12L13.2 17.7" fill="none" stroke="#fdfeff" stroke-width="3"/><path d="M8.5 12H18" stroke="#fdfeff" stroke-width="2.8"/></g></svg>
<svg style="left:546.5px;top:250.5px" width="24" height="24" viewBox="0 0 24 24" ><defs><linearGradient id="gb" x1="0.2" y1="0" x2="0.8" y2="1"><stop offset="0" stop-color="#66acdf"/><stop offset="0.55" stop-color="#3a86cb"/><stop offset="1" stop-color="#2c72b8"/></linearGradient></defs><circle cx="12" cy="12" r="11.2" fill="#8c98a8"/><circle cx="12" cy="12" r="9.8" fill="url(#gb)"/><g transform="rotate(180 12 12)"><path d="M13.2 6.3L7.5 12L13.2 17.7" fill="none" stroke="#fdfeff" stroke-width="3"/><path d="M8.5 12H18" stroke="#fdfeff" stroke-width="2.8"/></g></svg>
<svg style="left:583.5px;top:250.5px" width="24" height="24" viewBox="0 0 24 24" ><defs><linearGradient id="gb" x1="0.2" y1="0" x2="0.8" y2="1"><stop offset="0" stop-color="#66acdf"/><stop offset="0.55" stop-color="#3a86cb"/><stop offset="1" stop-color="#2c72b8"/></linearGradient></defs><circle cx="12" cy="12" r="11.2" fill="#8c98a8"/><circle cx="12" cy="12" r="9.8" fill="url(#gb)"/><g transform="rotate(270 12 12)"><path d="M13.2 6.3L7.5 12L13.2 17.7" fill="none" stroke="#fdfeff" stroke-width="3"/><path d="M8.5 12H18" stroke="#fdfeff" stroke-width="2.8"/></g></svg>
<svg style="left:629.5px;top:250.5px" width="24" height="24" viewBox="0 0 24 24" ><defs><linearGradient id="gg" x1="0.2" y1="0" x2="0.8" y2="1"><stop offset="0" stop-color="#8fd56c"/><stop offset="0.55" stop-color="#55b336"/><stop offset="1" stop-color="#3f9a28"/></linearGradient></defs><circle cx="12" cy="12" r="11.2" fill="#93a393"/><circle cx="12" cy="12" r="9.8" fill="url(#gg)"/><path d="M12 5.5V18.5M5.5 12H18.5" stroke="#e8f7df" stroke-width="3.2"/></svg>
<svg style="left:678.5px;top:250.5px" width="24" height="24" viewBox="0 0 24 24" ><defs><linearGradient id="gr" x1="0.2" y1="0" x2="0.8" y2="1"><stop offset="0" stop-color="#e17a74"/><stop offset="0.55" stop-color="#cc4a45"/><stop offset="1" stop-color="#b73632"/></linearGradient></defs><circle cx="12" cy="12" r="11.2" fill="#a99c9c"/><circle cx="12" cy="12" r="9.8" fill="url(#gr)"/><path d="M7.6 7.6L16.4 16.4M16.4 7.6L7.6 16.4" stroke="#fbe3e0" stroke-width="2.8"/></svg>
<div style="left:657px;top:251px;width:1px;height:23px;background:#7f9fc8"></div>
<svg style="left:660.5px;top:261.5px" width="7" height="4" viewBox="0 0 7 4" ><polygon points="0,0 7,0 3.5,4" fill="#000"/></svg>
<svg style="left:716.5px;top:249.5px" width="23" height="25" viewBox="0 0 23 25" ><path d="M8.5 0.5H18L22.5 5V18.5H8.5Z" fill="#f6f6f6" stroke="#9f9f9f"/>
<path d="M11 6H19M11 8.5H19M16 11H19" stroke="#c9c9c9" stroke-width="1"/>
<path d="M0.5 6.5H10.5L14.5 10.5V24.5H0.5Z" fill="#fcfcfc" stroke="#989898"/>
<path d="M3 13H12M3 15.5H12M3 18H12M3 20.5H9" stroke="#b9b9b9" stroke-width="1"/></svg>
<svg style="left:751px;top:249px" width="28" height="28" viewBox="0 0 28 28" ><path d="M13 15L4 25" stroke="#8a5a12" stroke-width="4.2" stroke-linecap="round"/>
<path d="M13 15L4.3 24.7" stroke="#e0a83a" stroke-width="2.2" stroke-linecap="round"/>
<circle cx="17.5" cy="9.5" r="7.3" fill="#eef4f9" stroke="#7d7d7d" stroke-width="2"/>
<circle cx="17.5" cy="9.5" r="5.6" fill="none" stroke="#d9dfe6" stroke-width="1.2"/></svg>
<svg style="left:798px;top:249px" width="25" height="26" viewBox="0 0 25 26" ><defs><linearGradient id="pf" x1="0" y1="0" x2="0" y2="1"><stop offset="0" stop-color="#e9e9e9"/><stop offset="1" stop-color="#bdbdbd"/></linearGradient></defs>
<path d="M3.5 5L8 1.5L22.5 1.5L22.5 16L17 21L3.5 21Z" fill="url(#pf)" stroke="#9b9b9b" stroke-width="0.9"/>
<path d="M17 5L22.5 1.5V16L17 21Z" fill="#9c9c9c"/>
<path d="M3.5 5L8 1.5H22.5L17 5Z" fill="#f4f4f4" stroke="#b0b0b0" stroke-width="0.6"/>
<rect x="5.5" y="7" width="9.5" height="3.2" fill="#8d9a8f"/>
<rect x="5.5" y="11.5" width="9.5" height="4" fill="#d8d8d8" stroke="#a8a8a8" stroke-width="0.6"/>
<path d="M4.5 17.5H14.5L12.5 24.5H0.8Z" fill="#fff" stroke="#bcbcbc" stroke-width="0.8"/></svg>
<div style="left:826px;top:251px;width:1px;height:23px;background:#7f9fc8"></div>
<svg style="left:829.5px;top:261.5px" width="7" height="4" viewBox="0 0 7 4" ><polygon points="0,0 7,0 3.5,4" fill="#000"/></svg>
<svg style="left:845px;top:249px" width="25" height="26" viewBox="0 0 25 26" ><defs><linearGradient id="pf" x1="0" y1="0" x2="0" y2="1"><stop offset="0" stop-color="#e9e9e9"/><stop offset="1" stop-color="#bdbdbd"/></linearGradient></defs>
<path d="M3.5 5L8 1.5L22.5 1.5L22.5 16L17 21L3.5 21Z" fill="url(#pf)" stroke="#9b9b9b" stroke-width="0.9"/>
<path d="M17 5L22.5 1.5V16L17 21Z" fill="#9c9c9c"/>
<path d="M3.5 5L8 1.5H22.5L17 5Z" fill="#f4f4f4" stroke="#b0b0b0" stroke-width="0.6"/>
<rect x="5.5" y="7" width="9.5" height="3.2" fill="#8d9a8f"/>
<rect x="5.5" y="11.5" width="9.5" height="4" fill="#d8d8d8" stroke="#a8a8a8" stroke-width="0.6"/>
<path d="M4.5 17.5H14.5L12.5 24.5H0.8Z" fill="#fff" stroke="#bcbcbc" stroke-width="0.8"/><path d="M19 19L23 24" stroke="#b07a2a" stroke-width="2.6" stroke-linecap="round"/><circle cx="16" cy="15.5" r="4.6" fill="#eef3f8" stroke="#9a9a9a" stroke-width="1.5"/></svg>
<div style="left:872px;top:251px;width:1px;height:23px;background:#7f9fc8"></div>
<svg style="left:875.5px;top:261.5px" width="7" height="4" viewBox="0 0 7 4" ><polygon points="0,0 7,0 3.5,4" fill="#000"/></svg>
<svg style="left:901px;top:251px" width="27" height="22" viewBox="0 0 27 22" ><defs><linearGradient id="bn" x1="0" y1="0" x2="1" y2="1"><stop offset="0" stop-color="#e3e7ea"/><stop offset="1" stop-color="#7f878d"/></linearGradient></defs>
<path d="M3 13L8 4L14 3L17 7L9 17L4 17Z" fill="url(#bn)" stroke="#6f777d" stroke-width="0.9"/>
<path d="M8 4L14 3L17 7L12 8Z" fill="#eef1f3" stroke="#8b9399" stroke-width="0.6"/>
<path d="M11 12L15 9.5H22L25.5 12.5V17L22 20H15L11 17Z" fill="url(#bn)" stroke="#5f676d" stroke-width="0.9"/>
<ellipse cx="18.3" cy="13.6" rx="3.6" ry="2.3" fill="#4b5257" stroke="#d5dadd" stroke-width="0.9"/></svg>
<div style="left:930px;top:251px;width:1px;height:23px;background:#7f9fc8"></div>
<svg style="left:933.5px;top:261.5px" width="7" height="4" viewBox="0 0 7 4" ><polygon points="0,0 7,0 3.5,4" fill="#000"/></svg>
<svg style="left:952px;top:248px" width="22" height="29" viewBox="0 0 22 29" ><g transform="rotate(17 11 14.5)"><path d="M7 8.5V21a4 4 0 0 0 8 0V5.2a3 3 0 0 0-6 0V20a1.2 1.2 0 0 0 2.4 0V8.5" fill="none" stroke="#5f656b" stroke-width="2.3" stroke-linecap="round"/>
<path d="M7 8.5V21a4 4 0 0 0 8 0V5.2a3 3 0 0 0-6 0V20a1.2 1.2 0 0 0 2.4 0V8.5" fill="none" stroke="#d3d7db" stroke-width="0.9" stroke-linecap="round"/></g></svg>
<svg style="left:990px;top:249.5px" width="20" height="25" viewBox="0 0 20 25" >
<defs><linearGradient id="lkb" x1="0" y1="0" x2="1" y2="1"><stop offset="0" stop-color="#f6ea9c"/><stop offset="0.5" stop-color="#e6cf58"/><stop offset="1" stop-color="#cfae30"/></linearGradient></defs>
<path d="M4.6 12.5V7.4a5.2 5.2 0 0 1 10.4 0V12.5" fill="none" stroke="#76838f" stroke-width="3.4"/>
<path d="M4.6 12.5V7.4a5.2 5.2 0 0 1 10.4 0V12.5" fill="none" stroke="#b9c5d0" stroke-width="1.5"/>
<rect x="1.5" y="10.8" width="16.8" height="13.2" rx="1.6" fill="url(#lkb)" stroke="#b59a30" stroke-width="1"/>
<ellipse cx="10.4" cy="18.2" rx="4.3" ry="2.3" fill="#b4bcc4" stroke="#8d959d" stroke-width="0.8"/>
</svg>
<div style="left:1557px;top:244px;width:104px;height:35px;background:linear-gradient(rgba(255,255,255,0.25),rgba(255,255,255,0.4));border-radius:2px"></div>
<div style="left:1778px;top:244px;width:53px;height:35px;background:linear-gradient(rgba(255,255,255,0.2),rgba(255,255,255,0.35));border-radius:2px"></div>
<svg style="left:1564px;top:250px" width="28" height="25" viewBox="0 0 28 25" ><path d="M3.6 13.2L9.8 20.2L23.6 3.6" fill="none" stroke="#2a6a1e" stroke-width="5.2" stroke-linejoin="miter" stroke-linecap="round"/>
<path d="M3.8 13.3L9.8 19.8L23.4 3.8" fill="none" stroke="#62bd49" stroke-width="3" stroke-linecap="round"/></svg>
<span class="t d" style="left:1596px;top:255.5px;letter-spacing:-0.13px;">Approve</span>
<div style="left:1675px;top:252px;width:100px;height:21px;background:#fff;border:1px solid #8fb0dc"></div>
<div style="left:1757px;top:253px;width:17px;height:19px;background:linear-gradient(#f2f7fd,#c5daf5)"></div>
<svg style="left:1761.5px;top:261.0px" width="7" height="4" viewBox="0 0 7 4" ><polygon points="0,0 7,0 3.5,4" fill="#2b3a55"/></svg>
<span class="t d" style="left:1681px;top:256px;letter-spacing:0.29px;">{Auto}</span>
<span class="t d" style="left:1785px;top:255.5px;letter-spacing:-0.39px;">Release</span>
<div style="left:496px;top:281px;width:1345px;height:25px;background:#dfebfb"></div>
<div style="left:496px;top:306px;width:1345px;height:1px;background:#93abc9"></div>
<div style="left:496px;top:282px;width:70px;height:25px;background:linear-gradient(#f8fbff,#e2edfa);border:1px solid #9fbfe6;border-bottom:none;border-radius:3px 3px 0 0"></div>
<span class="t d dn" style="left:506px;top:287px;">Document</span>
<span class="t d dn" style="left:579.5px;top:287px;">General</span>
<span class="t d dn" style="left:641.5px;top:287px;">Shipping</span>
<span class="t d dn" style="left:706px;top:287px;">Financial</span>
<span class="t d dn" style="left:772.5px;top:287px;">Notes</span>
<div style="left:496px;top:307px;width:1345px;height:189px;background:linear-gradient(#e3edf9 0px,#d4e2f3 22px,#d8e6f7 100%);border:1px solid #9fbfe6;border-top:none;border-bottom:none"></div>
<span class="t d" style="left:504px;top:321.5px;letter-spacing:-0.24px;">Document Number:</span>
<span class="t d" style="left:504px;top:357.5px;letter-spacing:0.02px;">Type:</span>
<span class="t d" style="left:504px;top:394.5px;letter-spacing:-0.10px;">Vendor:</span>
<span class="t d" style="left:504px;top:430.5px;letter-spacing:-0.18px;">Confirmation Number:</span>
<div style="left:625px;top:319px;width:272px;height:19px;background:#fff;border:1px solid #7ba2d6"></div>
<span class="t d" style="left:630px;top:321.5px;color:#000">PO00583</span>
<div style="left:625px;top:354px;width:321px;height:21px;background:#fff;border:1px solid #7ba2d6"></div>
<span class="t d" style="left:630px;top:357.5px;letter-spacing:-0.19px;color:#000">Purchase Order</span>
<div style="left:927px;top:355px;width:18px;height:19px;background:linear-gradient(#f4f8fe,#c3d9f5)"></div>
<svg style="left:932.5px;top:362.0px" width="7" height="4" viewBox="0 0 7 4" ><polygon points="0,0 7,0 3.5,4" fill="#1f2d45"/></svg>
<div style="left:625px;top:391px;width:321px;height:21px;background:#fff;border:1px solid #b9b9b9"></div>
<span class="t d" style="left:630px;top:394.5px;letter-spacing:-0.13px;color:#8c8c8c">Shaped Window Experts - sh1</span>
<div style="left:927px;top:392px;width:18px;height:19px;background:#ececec"></div>
<svg style="left:932.5px;top:399.0px" width="7" height="4" viewBox="0 0 7 4" ><polygon points="0,0 7,0 3.5,4" fill="#8c8c8c"/></svg>
<div style="left:625px;top:428px;width:321px;height:19px;background:#fff;border:1px solid #7ba2d6"></div>
<span class="t d" style="left:901px;top:321.5px;text-decoration:underline;letter-spacing:-0.15px">Relations</span>
<span class="t d" style="left:950px;top:321.5px;letter-spacing:0.09px;">Date:</span>
<span class="t d" style="left:950px;top:357.5px;letter-spacing:-0.11px;">Required Date:</span>
<span class="t d" style="left:950px;top:394.5px;letter-spacing:-0.02px;">Expected Date:</span>
<span class="t d" style="left:950px;top:430.5px;letter-spacing:-0.13px;">Release Status:</span>
<div style="left:1042px;top:319px;width:327px;height:19px;background:#fff;border:1px solid #7ba2d6"></div>
<span class="t d" style="left:1047px;top:321.5px;letter-spacing:0.12px;color:#000">11/15/2017</span>
<div style="left:1373px;top:319px;width:19px;height:18px;background:linear-gradient(#fff,#e3e7ee);border:1px solid #8fb0dc"></div>
<div style="left:1374px;top:320px;width:17px;height:4px;background:#dbe8f8;border-bottom:1px solid #a8c3e6"></div>
<span class="t " style="left:1373px;top:324.5px;width:19px;text-align:center;font-size:10px;color:#222;line-height:12px;height:12px;-webkit-text-stroke:0.2px">15</span>
<div style="left:1042px;top:355px;width:327px;height:19px;background:#fff;border:1px solid #7ba2d6"></div>
<span class="t d" style="left:1047px;top:357.5px;letter-spacing:0.12px;color:#000">11/15/2017</span>
<div style="left:1373px;top:356px;width:19px;height:18px;background:linear-gradient(#fff,#e3e7ee);border:1px solid #8fb0dc"></div>
<div style="left:1374px;top:357px;width:17px;height:4px;background:#dbe8f8;border-bottom:1px solid #a8c3e6"></div>
<span class="t " style="left:1373px;top:361.5px;width:19px;text-align:center;font-size:10px;color:#222;line-height:12px;height:12px;-webkit-text-stroke:0.2px">15</span>
<div style="left:1042px;top:392px;width:327px;height:19px;background:#fff;border:1px solid #7ba2d6"></div>
<span class="t d" style="left:1047px;top:394.5px;letter-spacing:0.12px;color:#000">11/23/2017</span>
<div style="left:1373px;top:392px;width:19px;height:18px;background:linear-gradient(#fff,#e3e7ee);border:1px solid #8fb0dc"></div>
<div style="left:1374px;top:393px;width:17px;height:4px;background:#dbe8f8;border-bottom:1px solid #a8c3e6"></div>
<span class="t " style="left:1373px;top:397.5px;width:19px;text-align:center;font-size:10px;color:#222;line-height:12px;height:12px;-webkit-text-stroke:0.2px">15</span>
<div style="left:1042px;top:428px;width:350px;height:19px;background:#fff;border:1px solid #7ba2d6"></div>
<span class="t d" style="left:1396px;top:321.5px;letter-spacing:-0.02px;">Reference:</span>
<span class="t d" style="left:1396px;top:357.5px;letter-spacing:-0.08px;">Terms:</span>
<span class="t d" style="left:1396px;top:394.5px;letter-spacing:0.27px;">F.O.B.:</span>
<span class="t d" style="left:1396px;top:430.5px;letter-spacing:-0.15px;">Discount:</span>
<div style="left:1466px;top:319px;width:352px;height:19px;background:#fff;border:1px solid #7ba2d6"></div>
<div style="left:1466px;top:354px;width:352px;height:21px;background:#fff;border:1px solid #7ba2d6"></div>
<span class="t d" style="left:1471px;top:357.5px;letter-spacing:-0.13px;color:#000">Net 30 Days</span>
<div style="left:1799px;top:355px;width:18px;height:19px;background:linear-gradient(#f4f8fe,#c3d9f5)"></div>
<svg style="left:1804.5px;top:362.0px" width="7" height="4" viewBox="0 0 7 4" ><polygon points="0,0 7,0 3.5,4" fill="#1f2d45"/></svg>
<div style="left:1466px;top:391px;width:352px;height:21px;background:#fff;border:1px solid #7ba2d6"></div>
<span class="t d" style="left:1471px;top:394.5px;letter-spacing:-0.13px;color:#000">Buyer</span>
<div style="left:1799px;top:392px;width:18px;height:19px;background:linear-gradient(#f4f8fe,#c3d9f5)"></div>
<svg style="left:1804.5px;top:399.0px" width="7" height="4" viewBox="0 0 7 4" ><polygon points="0,0 7,0 3.5,4" fill="#1f2d45"/></svg>
<div style="left:1466px;top:428px;width:352px;height:19px;background:#fff;border:1px solid #7ba2d6"></div>
<div style="left:496px;top:496px;width:1346px;height:172px;background:#fff;border:1px solid #000"></div>
<div style="left:496px;top:496px;width:1346px;height:1px;background:#000"></div>
<div style="left:497px;top:497px;width:1269px;height:23px;background:linear-gradient(#eef5fd 0%,#dfebfa 50%,#cbdef5 100%);border-bottom:1px solid #9ebce2"></div>
<div style="left:1768px;top:497px;width:57px;height:23px;background:linear-gradient(#eef5fd 0%,#dfebfa 50%,#cbdef5 100%);border-bottom:1px solid #9ebce2"></div>
<div style="left:497px;top:520px;width:25px;height:131px;background:linear-gradient(90deg,#f4f8fe,#c7dbf4)"></div>
<svg style="left:509px;top:505px" width="11" height="11" viewBox="0 0 11 11" ><polygon points="10,1 10,10 1,10" fill="#c3cfdf"/></svg>
<div style="left:522px;top:520px;width:1240px;height:29px;background:#fff"></div>
<div style="left:522px;top:549px;width:1239px;height:30px;background:#f5f5dc"></div>
<div style="left:1768px;top:520px;width:57px;height:59px;background:#fff"></div>
<div style="left:498px;top:519px;width:22px;height:1px;background:#a9c3e6"></div>
<div style="left:522px;top:579px;width:1240px;height:29px;background:#edf3fc"></div>
<div style="left:522px;top:608px;width:1239px;height:30px;background:#f5f5dc"></div>
<div style="left:1768px;top:579px;width:57px;height:59px;background:#edf3fc"></div>
<div style="left:498px;top:578px;width:22px;height:1px;background:#a9c3e6"></div>
<div style="left:522px;top:638px;width:1240px;height:29px;background:#fff"></div>
<div style="left:522px;top:667px;width:1239px;height:30px;background:#f5f5dc"></div>
<div style="left:1768px;top:638px;width:57px;height:59px;background:#fff"></div>
<div style="left:498px;top:637px;width:22px;height:1px;background:#a9c3e6"></div>
<div style="left:1117px;top:520px;width:31px;height:29px;background:#a6c8ef"></div>
<div style="left:547px;top:500px;width:1px;height:18px;background:#b4cbe8"></div>
<div style="left:548px;top:500px;width:1px;height:18px;background:#f7fbff"></div>
<div style="left:609px;top:500px;width:1px;height:18px;background:#b4cbe8"></div>
<div style="left:610px;top:500px;width:1px;height:18px;background:#f7fbff"></div>
<div style="left:714px;top:500px;width:1px;height:18px;background:#b4cbe8"></div>
<div style="left:715px;top:500px;width:1px;height:18px;background:#f7fbff"></div>
<div style="left:968px;top:500px;width:1px;height:18px;background:#b4cbe8"></div>
<div style="left:969px;top:500px;width:1px;height:18px;background:#f7fbff"></div>
<div style="left:1041px;top:500px;width:1px;height:18px;background:#b4cbe8"></div>
<div style="left:1042px;top:500px;width:1px;height:18px;background:#f7fbff"></div>
<div style="left:1116px;top:500px;width:1px;height:18px;background:#b4cbe8"></div>
<div style="left:1117px;top:500px;width:1px;height:18px;background:#f7fbff"></div>
<div style="left:1148px;top:500px;width:1px;height:18px;background:#b4cbe8"></div>
<div style="left:1149px;top:500px;width:1px;height:18px;background:#f7fbff"></div>
<div style="left:1193px;top:500px;width:1px;height:18px;background:#b4cbe8"></div>
<div style="left:1194px;top:500px;width:1px;height:18px;background:#f7fbff"></div>
<div style="left:1239px;top:500px;width:1px;height:18px;background:#b4cbe8"></div>
<div style="left:1240px;top:500px;width:1px;height:18px;background:#f7fbff"></div>
<div style="left:1295px;top:500px;width:1px;height:18px;background:#b4cbe8"></div>
<div style="left:1296px;top:500px;width:1px;height:18px;background:#f7fbff"></div>
<div style="left:1364px;top:500px;width:1px;height:18px;background:#b4cbe8"></div>
<div style="left:1365px;top:500px;width:1px;height:18px;background:#f7fbff"></div>
<div style="left:1435px;top:500px;width:1px;height:18px;background:#b4cbe8"></div>
<div style="left:1436px;top:500px;width:1px;height:18px;background:#f7fbff"></div>
<div style="left:1514px;top:500px;width:1px;height:18px;background:#b4cbe8"></div>
<div style="left:1515px;top:500px;width:1px;height:18px;background:#f7fbff"></div>
<div style="left:1578px;top:500px;width:1px;height:18px;background:#b4cbe8"></div>
<div style="left:1579px;top:500px;width:1px;height:18px;background:#f7fbff"></div>
<div style="left:1618px;top:500px;width:1px;height:18px;background:#b4cbe8"></div>
<div style="left:1619px;top:500px;width:1px;height:18px;background:#f7fbff"></div>
<div style="left:1684px;top:500px;width:1px;height:18px;background:#b4cbe8"></div>
<div style="left:1685px;top:500px;width:1px;height:18px;background:#f7fbff"></div>
<div style="left:1761px;top:500px;width:1px;height:18px;background:#b4cbe8"></div>
<div style="left:1762px;top:500px;width:1px;height:18px;background:#f7fbff"></div>
<div style="left:521px;top:500px;width:1px;height:18px;background:#b4cbe8"></div>
<span class="t d" style="left:527px;top:502px;">Qty</span>
<span class="t d" style="left:553px;top:502px;letter-spacing:0.03px;">Order-Item</span>
<span class="t d" style="left:615px;top:502px;letter-spacing:-0.01px;">Category</span>
<span class="t d" style="left:720px;top:502px;">Part</span>
<span class="t d" style="left:974px;top:502px;letter-spacing:-0.10px;">Vendor Part</span>
<span class="t d" style="left:1046px;top:502px;letter-spacing:-0.20px;">Description</span>
<span class="t d" style="left:1122px;top:502px;">UOM</span>
<span class="t d" style="left:1690px;top:502px;letter-spacing:-0.59px;">Commands</span>
<span class="t d" style="left:1772px;top:502px;letter-spacing:-0.18px;">Image</span>
<span class="t d" style="left:1109px;top:502px;width:80px;text-align:right;">Width</span>
<span class="t d" style="left:1155px;top:502px;width:80px;text-align:right;">Height</span>
<span class="t d" style="left:1211px;top:502px;width:80px;text-align:right;letter-spacing:-0.45px;">Thickness</span>
<span class="t d" style="left:1279px;top:502px;width:80px;text-align:right;letter-spacing:-0.01px;">Weight</span>
<span class="t d" style="left:1351px;top:502px;width:80px;text-align:right;">Price</span>
<span class="t d" style="left:1430px;top:502px;width:80px;text-align:right;letter-spacing:-0.39px;">SqFt Price</span>
<span class="t d" style="left:1494px;top:502px;width:80px;text-align:right;">Total</span>
<span class="t d" style="left:1536px;top:502px;width:80px;text-align:right;">Details</span>
<span class="t d" style="left:503px;top:521px;font-weight:bold;font-size:12px">1</span>
<span class="t d" style="left:522px;top:521px;width:17px;text-align:right;">1</span>
<span class="t d" style="left:549.5px;top:521px;letter-spacing:0.11px;">6369-3.1</span>
<span class="t d" style="left:610px;top:521px;letter-spacing:-0.26px;">Shaped Windows</span>
<span class="t d" style="left:715.5px;top:521px;letter-spacing:-0.60px;">8800HE - HALF EYEBROW PW</span>
<span class="t d" style="left:968px;top:521px;">HE</span>
<span class="t d" style="left:1042px;top:521px;letter-spacing:-0.14px;">Half Eyebrow</span>
<span class="t d" style="left:1114px;top:521px;width:80px;text-align:right;letter-spacing:0.05px;">29  3/4</span>
<span class="t d" style="left:1160px;top:521px;width:80px;text-align:right;letter-spacing:-0.02px;">48  3/64</span>
<span class="t d" style="left:1216px;top:521px;width:80px;text-align:right;">0</span>
<span class="t d" style="left:1284px;top:521px;width:80px;text-align:right;letter-spacing:-0.05px;">22.58813</span>
<span class="t d" style="left:1356px;top:521px;width:80px;text-align:right;letter-spacing:-0.06px;">$225.0000</span>
<span class="t d" style="left:1435px;top:521px;width:80px;text-align:right;letter-spacing:-0.05px;">$22.6652</span>
<span class="t d" style="left:1499px;top:521px;width:80px;text-align:right;letter-spacing:-0.02px;">$225.00</span>
<span class="t d" style="left:522px;top:548.5px;letter-spacing:-0.27px;">SIZING{EX}, COLOR{WH}, LEG DIMENSION{LEG=[30.0000]}, ORIENTATION{LEFT}, GLASS{LECL, GAS{ARG}}</span>
<div style="left:1619px;top:521px;width:66px;height:28px;background:linear-gradient(#e9f2fd,#c6dbf6);border:1px solid #8eaedb"></div>
<span class="t d" style="left:1619px;top:528.5px;width:66px;text-align:center;letter-spacing:-0.16px;">Options</span>
<svg style="left:1689px;top:527px" width="15" height="16" viewBox="0 0 23 25" ><path d="M8.5 0.5H18L22.5 5V18.5H8.5Z" fill="#f6f6f6" stroke="#9f9f9f"/>
<path d="M11 6H19M11 8.5H19M16 11H19" stroke="#c9c9c9" stroke-width="1"/>
<path d="M0.5 6.5H10.5L14.5 10.5V24.5H0.5Z" fill="#fcfcfc" stroke="#989898"/>
<path d="M3 13H12M3 15.5H12M3 18H12M3 20.5H9" stroke="#b9b9b9" stroke-width="1"/></svg>
<svg style="left:1707.5px;top:526.5px" width="15" height="17" viewBox="0 0 15 17" ><defs><linearGradient id="ga" x1="0" y1="0" x2="0" y2="1"><stop offset="0" stop-color="#7be85e"/><stop offset="1" stop-color="#2fc41c"/></linearGradient></defs><g><path d="M4.2 0.8H10.8V8.2H14.2L7.5 16.2L0.8 8.2H4.2Z" fill="url(#ga)" stroke="#2a9a1c" stroke-width="1.1" stroke-linejoin="round"/></g></svg>
<svg style="left:1725.5px;top:526.3px" width="17" height="17" viewBox="0 0 17 17" ><defs><linearGradient id="gr2" x1="0.2" y1="0" x2="0.8" y2="1"><stop offset="0" stop-color="#de7771"/><stop offset="0.55" stop-color="#cb4b46"/><stop offset="1" stop-color="#b83a35"/></linearGradient></defs><circle cx="8.5" cy="8.5" r="8.1" fill="#ada2a2"/><circle cx="8.5" cy="8.5" r="7" fill="url(#gr2)"/><path d="M5.4 5.4L11.6 11.6M11.6 5.4L5.4 11.6" stroke="#fae1de" stroke-width="2.1"/></svg>
<svg style="left:1778px;top:523px" width="35" height="55" viewBox="0 0 35 55" ><defs><linearGradient id="gl" x1="1" y1="0" x2="0" y2="1"><stop offset="0" stop-color="#8cd9de"/><stop offset="0.5" stop-color="#4fbcc3"/><stop offset="1" stop-color="#1e9ea6"/></linearGradient></defs><g><path d="M0.8 54.5V20.5Q6 6 34.2 0.8V54.5Z" fill="#e4e7e9" stroke="#9aa0a5" stroke-width="0.9"/><path d="M2.8 52.5V21Q8 8.5 32.2 3.4V52.5Z" fill="url(#gl)" stroke="#6d979c" stroke-width="0.7"/></g></svg>
<span class="t d" style="left:503px;top:580px;font-weight:bold;font-size:12px">2</span>
<span class="t d" style="left:522px;top:580px;width:17px;text-align:right;">1</span>
<span class="t d" style="left:549.5px;top:580px;letter-spacing:0.11px;">6369-3.2</span>
<span class="t d" style="left:610px;top:580px;letter-spacing:-0.26px;">Shaped Windows</span>
<span class="t d" style="left:715.5px;top:580px;letter-spacing:-0.60px;">8800FE - FULL EYEBROW PW</span>
<span class="t d" style="left:968px;top:580px;">FE</span>
<span class="t d" style="left:1042px;top:580px;letter-spacing:-0.25px;">Full Eyebrow</span>
<span class="t d" style="left:1114px;top:580px;width:80px;text-align:right;letter-spacing:0.05px;">29  3/4</span>
<span class="t d" style="left:1160px;top:580px;width:80px;text-align:right;">50</span>
<span class="t d" style="left:1216px;top:580px;width:80px;text-align:right;">0</span>
<span class="t d" style="left:1284px;top:580px;width:80px;text-align:right;">23.273</span>
<span class="t d" style="left:1356px;top:580px;width:80px;text-align:right;letter-spacing:-0.06px;">$255.0000</span>
<span class="t d" style="left:1435px;top:580px;width:80px;text-align:right;letter-spacing:-0.05px;">$24.6857</span>
<span class="t d" style="left:1499px;top:580px;width:80px;text-align:right;letter-spacing:-0.02px;">$255.00</span>
<span class="t d" style="left:522px;top:607.5px;letter-spacing:-0.28px;">SIZING{EX}, LEG DIMENSION{LEG=[48.1468]}, COLOR{WH}, GLASS{LECL, GAS{ARG}}</span>
<div style="left:1619px;top:580px;width:66px;height:28px;background:linear-gradient(#e9f2fd,#c6dbf6);border:1px solid #8eaedb"></div>
<span class="t d" style="left:1619px;top:587.5px;width:66px;text-align:center;letter-spacing:-0.16px;">Options</span>
<svg style="left:1689px;top:586px" width="15" height="16" viewBox="0 0 23 25" ><path d="M8.5 0.5H18L22.5 5V18.5H8.5Z" fill="#f6f6f6" stroke="#9f9f9f"/>
<path d="M11 6H19M11 8.5H19M16 11H19" stroke="#c9c9c9" stroke-width="1"/>
<path d="M0.5 6.5H10.5L14.5 10.5V24.5H0.5Z" fill="#fcfcfc" stroke="#989898"/>
<path d="M3 13H12M3 15.5H12M3 18H12M3 20.5H9" stroke="#b9b9b9" stroke-width="1"/></svg>
<svg style="left:1707.5px;top:585.5px" width="15" height="17" viewBox="0 0 15 17" ><defs><linearGradient id="ga" x1="0" y1="0" x2="0" y2="1"><stop offset="0" stop-color="#7be85e"/><stop offset="1" stop-color="#2fc41c"/></linearGradient></defs><g transform="rotate(180 7.5 8.5)"><path d="M4.2 0.8H10.8V8.2H14.2L7.5 16.2L0.8 8.2H4.2Z" fill="url(#ga)" stroke="#2a9a1c" stroke-width="1.1" stroke-linejoin="round"/></g></svg>
<svg style="left:1726.5px;top:585.5px" width="15" height="17" viewBox="0 0 15 17" ><defs><linearGradient id="ga" x1="0" y1="0" x2="0" y2="1"><stop offset="0" stop-color="#7be85e"/><stop offset="1" stop-color="#2fc41c"/></linearGradient></defs><g><path d="M4.2 0.8H10.8V8.2H14.2L7.5 16.2L0.8 8.2H4.2Z" fill="url(#ga)" stroke="#2a9a1c" stroke-width="1.1" stroke-linejoin="round"/></g></svg>
<svg style="left:1744.5px;top:585.3px" width="17" height="17" viewBox="0 0 17 17" ><defs><linearGradient id="gr2" x1="0.2" y1="0" x2="0.8" y2="1"><stop offset="0" stop-color="#de7771"/><stop offset="0.55" stop-color="#cb4b46"/><stop offset="1" stop-color="#b83a35"/></linearGradient></defs><circle cx="8.5" cy="8.5" r="8.1" fill="#ada2a2"/><circle cx="8.5" cy="8.5" r="7" fill="url(#gr2)"/><path d="M5.4 5.4L11.6 11.6M11.6 5.4L5.4 11.6" stroke="#fae1de" stroke-width="2.1"/></svg>
<svg style="left:1778px;top:582px" width="35" height="55" viewBox="0 0 35 55" ><defs><linearGradient id="gl" x1="1" y1="0" x2="0" y2="1"><stop offset="0" stop-color="#8cd9de"/><stop offset="0.5" stop-color="#4fbcc3"/><stop offset="1" stop-color="#1e9ea6"/></linearGradient></defs><g><path d="M1.5 54.5V4.8Q17.5 -1.5 33.5 4.8V54.5Z" fill="#e4e7e9" stroke="#9aa0a5" stroke-width="0.9"/><path d="M3.5 52.5V6.6Q17.5 1 31.5 6.6V52.5Z" fill="url(#gl)" stroke="#6d979c" stroke-width="0.7"/></g></svg>
<span class="t d" style="left:503px;top:639px;font-weight:bold;font-size:12px">3</span>
<span class="t d" style="left:522px;top:639px;width:17px;text-align:right;">1</span>
<span class="t d" style="left:549.5px;top:639px;letter-spacing:0.11px;">6369-3.3</span>
<span class="t d" style="left:610px;top:639px;letter-spacing:-0.26px;">Shaped Windows</span>
<span class="t d" style="left:715.5px;top:639px;letter-spacing:-0.60px;">8800HE - HALF EYEBROW PW</span>
<span class="t d" style="left:968px;top:639px;">HE</span>
<span class="t d" style="left:1042px;top:639px;letter-spacing:-0.14px;">Half Eyebrow</span>
<span class="t d" style="left:1114px;top:639px;width:80px;text-align:right;letter-spacing:0.05px;">29  3/4</span>
<span class="t d" style="left:1160px;top:639px;width:80px;text-align:right;letter-spacing:-0.02px;">48  3/64</span>
<span class="t d" style="left:1216px;top:639px;width:80px;text-align:right;">0</span>
<span class="t d" style="left:1284px;top:639px;width:80px;text-align:right;letter-spacing:-0.05px;">22.58813</span>
<span class="t d" style="left:1356px;top:639px;width:80px;text-align:right;letter-spacing:-0.06px;">$225.0000</span>
<span class="t d" style="left:1435px;top:639px;width:80px;text-align:right;letter-spacing:-0.05px;">$22.6652</span>
<span class="t d" style="left:1499px;top:639px;width:80px;text-align:right;letter-spacing:-0.02px;">$225.00</span>
<div style="left:1619px;top:639px;width:66px;height:28px;background:linear-gradient(#e9f2fd,#c6dbf6);border:1px solid #8eaedb"></div>
<span class="t d" style="left:1619px;top:646.5px;width:66px;text-align:center;letter-spacing:-0.16px;">Options</span>
<svg style="left:1689px;top:645px" width="15" height="16" viewBox="0 0 23 25" ><path d="M8.5 0.5H18L22.5 5V18.5H8.5Z" fill="#f6f6f6" stroke="#9f9f9f"/>
<path d="M11 6H19M11 8.5H19M16 11H19" stroke="#c9c9c9" stroke-width="1"/>
<path d="M0.5 6.5H10.5L14.5 10.5V24.5H0.5Z" fill="#fcfcfc" stroke="#989898"/>
<path d="M3 13H12M3 15.5H12M3 18H12M3 20.5H9" stroke="#b9b9b9" stroke-width="1"/></svg>
<svg style="left:1707.5px;top:644.5px" width="15" height="17" viewBox="0 0 15 17" ><defs><linearGradient id="ga" x1="0" y1="0" x2="0" y2="1"><stop offset="0" stop-color="#7be85e"/><stop offset="1" stop-color="#2fc41c"/></linearGradient></defs><g transform="rotate(180 7.5 8.5)"><path d="M4.2 0.8H10.8V8.2H14.2L7.5 16.2L0.8 8.2H4.2Z" fill="url(#ga)" stroke="#2a9a1c" stroke-width="1.1" stroke-linejoin="round"/></g></svg>
<svg style="left:1726.5px;top:644.5px" width="15" height="17" viewBox="0 0 15 17" ><defs><linearGradient id="ga" x1="0" y1="0" x2="0" y2="1"><stop offset="0" stop-color="#7be85e"/><stop offset="1" stop-color="#2fc41c"/></linearGradient></defs><g><path d="M4.2 0.8H10.8V8.2H14.2L7.5 16.2L0.8 8.2H4.2Z" fill="url(#ga)" stroke="#2a9a1c" stroke-width="1.1" stroke-linejoin="round"/></g></svg>
<svg style="left:1744.5px;top:644.3px" width="17" height="17" viewBox="0 0 17 17" ><defs><linearGradient id="gr2" x1="0.2" y1="0" x2="0.8" y2="1"><stop offset="0" stop-color="#de7771"/><stop offset="0.55" stop-color="#cb4b46"/><stop offset="1" stop-color="#b83a35"/></linearGradient></defs><circle cx="8.5" cy="8.5" r="8.1" fill="#ada2a2"/><circle cx="8.5" cy="8.5" r="7" fill="url(#gr2)"/><path d="M5.4 5.4L11.6 11.6M11.6 5.4L5.4 11.6" stroke="#fae1de" stroke-width="2.1"/></svg>
<svg style="left:1778px;top:641px" width="35" height="55" viewBox="0 0 35 55" ><defs><linearGradient id="gl" x1="1" y1="0" x2="0" y2="1"><stop offset="0" stop-color="#8cd9de"/><stop offset="0.5" stop-color="#4fbcc3"/><stop offset="1" stop-color="#1e9ea6"/></linearGradient></defs><g transform="translate(35 0) scale(-1 1)"><path d="M0.8 54.5V20.5Q6 6 34.2 0.8V54.5Z" fill="#e4e7e9" stroke="#9aa0a5" stroke-width="0.9"/><path d="M2.8 52.5V21Q8 8.5 32.2 3.4V52.5Z" fill="url(#gl)" stroke="#6d979c" stroke-width="0.7"/></g></svg>
<div style="left:1765px;top:496px;width:2px;height:172px;background:#000"></div>
<div style="left:497px;top:651px;width:1268px;height:16px;background:linear-gradient(#f7faff,#dbe7f7)"></div>
<div style="left:497px;top:651px;width:25px;height:16px;background:#f0f0f0"></div>
<div style="left:522px;top:652px;width:17px;height:14px;background:linear-gradient(#f4f8fe,#c9dcf5);border:1px solid #8eaedb"></div>
<svg style="left:528.0px;top:655.5px" width="4" height="7" viewBox="0 0 4 7" ><polygon points="4,0 0,3.5 4,7" fill="#3b5b8a"/></svg>
<div style="left:539px;top:652px;width:1103px;height:14px;background:linear-gradient(#f6f9fe,#cfe0f6);border:1px solid #a9c4e8"></div>
<div style="left:1642px;top:652px;width:106px;height:14px;background:#f3f3ea"></div>
<div style="left:1748px;top:652px;width:17px;height:14px;background:linear-gradient(#f4f8fe,#c9dcf5);border:1px solid #8eaedb"></div>
<svg style="left:1754.5px;top:655.5px" width="4" height="7" viewBox="0 0 4 7" ><polygon points="0,0 4,3.5 0,7" fill="#4a6a98"/></svg>
<div style="left:1825px;top:497px;width:16px;height:170px;background:linear-gradient(90deg,#f1f1ea,#fdfdfb)"></div>
<div style="left:1825px;top:497px;width:16px;height:16px;background:linear-gradient(90deg,#f4f8fe,#c9dcf5);border:1px solid #8eaedb"></div>
<svg style="left:1829.5px;top:503.0px" width="7" height="4" viewBox="0 0 7 4" ><polygon points="0,4 7,4 3.5,0" fill="#3b5b8a"/></svg>
<div style="left:1825px;top:513px;width:16px;height:27px;background:linear-gradient(90deg,#f6f9fe,#cfe0f6);border:1px solid #a9c4e8"></div>
<div style="left:1825px;top:651px;width:16px;height:16px;background:linear-gradient(90deg,#f4f8fe,#c9dcf5);border:1px solid #8eaedb"></div>
<svg style="left:1829.5px;top:657.5px" width="7" height="4" viewBox="0 0 7 4" ><polygon points="0,0 7,0 3.5,4" fill="#3b5b8a"/></svg>
<div style="left:496px;top:667px;width:1346px;height:1px;background:#000"></div>
<div style="left:496px;top:668px;width:1346px;height:30px;background:#cfe2fa"></div>
<div style="left:492px;top:668px;width:1354px;height:172px;background:linear-gradient(#cee2fb,#c5dbf9)"></div>
<div style="left:496px;top:694px;width:931px;height:1px;background:#9fbfe6"></div>
<div style="left:496px;top:670px;width:97px;height:25px;background:linear-gradient(#f4f8fe,#d6e6fa);border:1px solid #9fbfe6;border-bottom:none;border-radius:3px 3px 0 0"></div>
<span class="t d dn" style="left:506px;top:675px;letter-spacing:-0.22px;">Item Comments</span>
<span class="t d dn" style="left:606px;top:675px;letter-spacing:-0.25px;">Reject Comments</span>
<div style="left:496px;top:695px;width:931px;height:70px;background:linear-gradient(#d9e6f6,#dbe8f8 24px,#d3e4f9 25px);border:1px solid #a9c6ea;border-top:none"></div>
<span class="t d" style="left:504px;top:703px;">Item Comment</span>
<div style="left:500px;top:721px;width:922px;height:40px;background:#fff;border:1px solid #8fb0dc"></div>
<div style="left:1405px;top:724px;width:15px;height:17px;background:#f7f9fc;border:1px solid #b9c7d9"></div>
<svg style="left:1409.0px;top:730.5px" width="7" height="4" viewBox="0 0 7 4" ><polygon points="0,4 7,4 3.5,0" fill="#4a5f80"/></svg>
<div style="left:1405px;top:741px;width:15px;height:17px;background:#f7f9fc;border:1px solid #b9c7d9"></div>
<svg style="left:1409.0px;top:747.5px" width="7" height="4" viewBox="0 0 7 4" ><polygon points="0,0 7,0 3.5,4" fill="#4a5f80"/></svg>
<svg style="left:1436px;top:733px" width="14" height="16" viewBox="0 0 14 16" ><rect x="0.5" y="0.5" width="13" height="15" fill="#fafafa" stroke="#8a8a8a"/><path d="M3 3.5H11M3 6H9M3 8.5H11M3 11H8M3 13H10" stroke="#555" stroke-width="1"/></svg>
<span class="t d" style="left:500px;top:770px;">Order Comment</span>
<div style="left:496px;top:788px;width:931px;height:46px;background:#fff;border:1px solid #8fb0dc"></div>
<div style="left:1408px;top:791px;width:15px;height:17px;background:#f7f9fc;border:1px solid #b9c7d9"></div>
<svg style="left:1412.0px;top:797.5px" width="7" height="4" viewBox="0 0 7 4" ><polygon points="0,4 7,4 3.5,0" fill="#4a5f80"/></svg>
<div style="left:1408px;top:814px;width:15px;height:17px;background:#f7f9fc;border:1px solid #b9c7d9"></div>
<svg style="left:1412.0px;top:820.5px" width="7" height="4" viewBox="0 0 7 4" ><polygon points="0,0 7,0 3.5,4" fill="#4a5f80"/></svg>
<svg style="left:1436px;top:803px" width="14" height="16" viewBox="0 0 14 16" ><rect x="0.5" y="0.5" width="13" height="15" fill="#fafafa" stroke="#8a8a8a"/><path d="M3 3.5H11M3 6H9M3 8.5H11M3 11H8M3 13H10" stroke="#555" stroke-width="1"/></svg>
<span class="t d" style="left:1461px;top:710px;">Surcharge:</span>
<div style="left:1660px;top:706px;width:30px;height:21px;background:#e6e9ee;border:1px solid #c3c8d0"></div>
<span class="t d" style="left:1660px;top:708.5px;width:30px;text-align:center;color:#8c8c8c">...</span>
<div style="left:1694px;top:707px;width:148px;height:19px;background:#fff;border:1px solid #7ba2d6"></div>
<span class="t d" style="left:1694px;top:709.5px;width:143px;text-align:right;letter-spacing:-0.05px;color:#000">$0.00</span>
<span class="t d" style="left:1461px;top:739px;">Subtotal:</span>
<div style="left:1694px;top:736px;width:148px;height:19px;background:#fff;border:1px solid #7ba2d6"></div>
<span class="t d" style="left:1694px;top:738.5px;width:143px;text-align:right;letter-spacing:0.05px;color:#000">$2,188.68</span>
<span class="t d" style="left:1461px;top:774px;">Tax:</span>
<div style="left:1660px;top:771px;width:30px;height:21px;background:linear-gradient(#e9f2fd,#c6dbf6);border:1px solid #8eaedb"></div>
<span class="t d" style="left:1660px;top:773.5px;width:30px;text-align:center;color:#000">...</span>
<div style="left:1694px;top:771px;width:148px;height:19px;background:#fff;border:1px solid #7ba2d6"></div>
<span class="t d" style="left:1694px;top:773.5px;width:143px;text-align:right;letter-spacing:-0.05px;color:#000">$0.00</span>
<span class="t d" style="left:1461px;top:810px;">Total:</span>
<div style="left:1694px;top:807px;width:148px;height:19px;background:#fff;border:1px solid #7ba2d6"></div>
<span class="t d" style="left:1694px;top:809.5px;width:143px;text-align:right;letter-spacing:0.05px;color:#000">$2,188.68</span>
<div style="left:496px;top:840px;width:1346px;height:29px;background:linear-gradient(#d5e2f3 0%,#c3d6ef 45%,#b7cdeb 100%);border:1px solid #9dbde6"></div>
<span class="t d" style="left:505px;top:849px;">Revision:</span>
<span class="t d" style="left:569.5px;top:849px;">0</span>
<span class="t d" style="left:609px;top:849px;">Status:</span>
<span class="t d" style="left:664px;top:849px;">New</span>
<div style="left:597px;top:844px;width:1px;height:22px;background:#e9f1fb"></div>
<div style="left:598px;top:844px;width:1px;height:22px;background:#a9c1e2"></div>
<div style="left:708px;top:844px;width:1px;height:22px;background:#e9f1fb"></div>
<div style="left:709px;top:844px;width:1px;height:22px;background:#a9c1e2"></div>
<div style="left:1517px;top:844px;width:1px;height:22px;background:#e9f1fb"></div>
<div style="left:1518px;top:844px;width:1px;height:22px;background:#a9c1e2"></div>
<div style="left:1666px;top:844px;width:1px;height:22px;background:#e9f1fb"></div>
<div style="left:1667px;top:844px;width:1px;height:22px;background:#a9c1e2"></div>
<span class="t d" style="left:1358px;top:849px;letter-spacing:-0.12px;">Entered By: Fenetech Admin</span>
<span class="t d" style="left:1530px;top:849px;letter-spacing:-0.06px;">Approved By:</span>
<span class="t d" style="left:1616px;top:849px;letter-spacing:0.32px;">{N/A}</span>
<span class="t d" style="left:1677px;top:849px;letter-spacing:-0.13px;">Location:</span>
<div style="left:1737px;top:846px;width:100px;height:20px;background:#fff;border:1px solid #8fb0dc"></div>
<div style="left:1818px;top:847px;width:18px;height:18px;background:linear-gradient(#f2f7fd,#c5daf5)"></div>
<svg style="left:1823.0px;top:854.5px" width="7" height="4" viewBox="0 0 7 4" ><polygon points="0,0 7,0 3.5,4" fill="#1f2d45"/></svg>
<span class="t d" style="left:1742px;top:849px;">MAIN</span>
</body></html>
